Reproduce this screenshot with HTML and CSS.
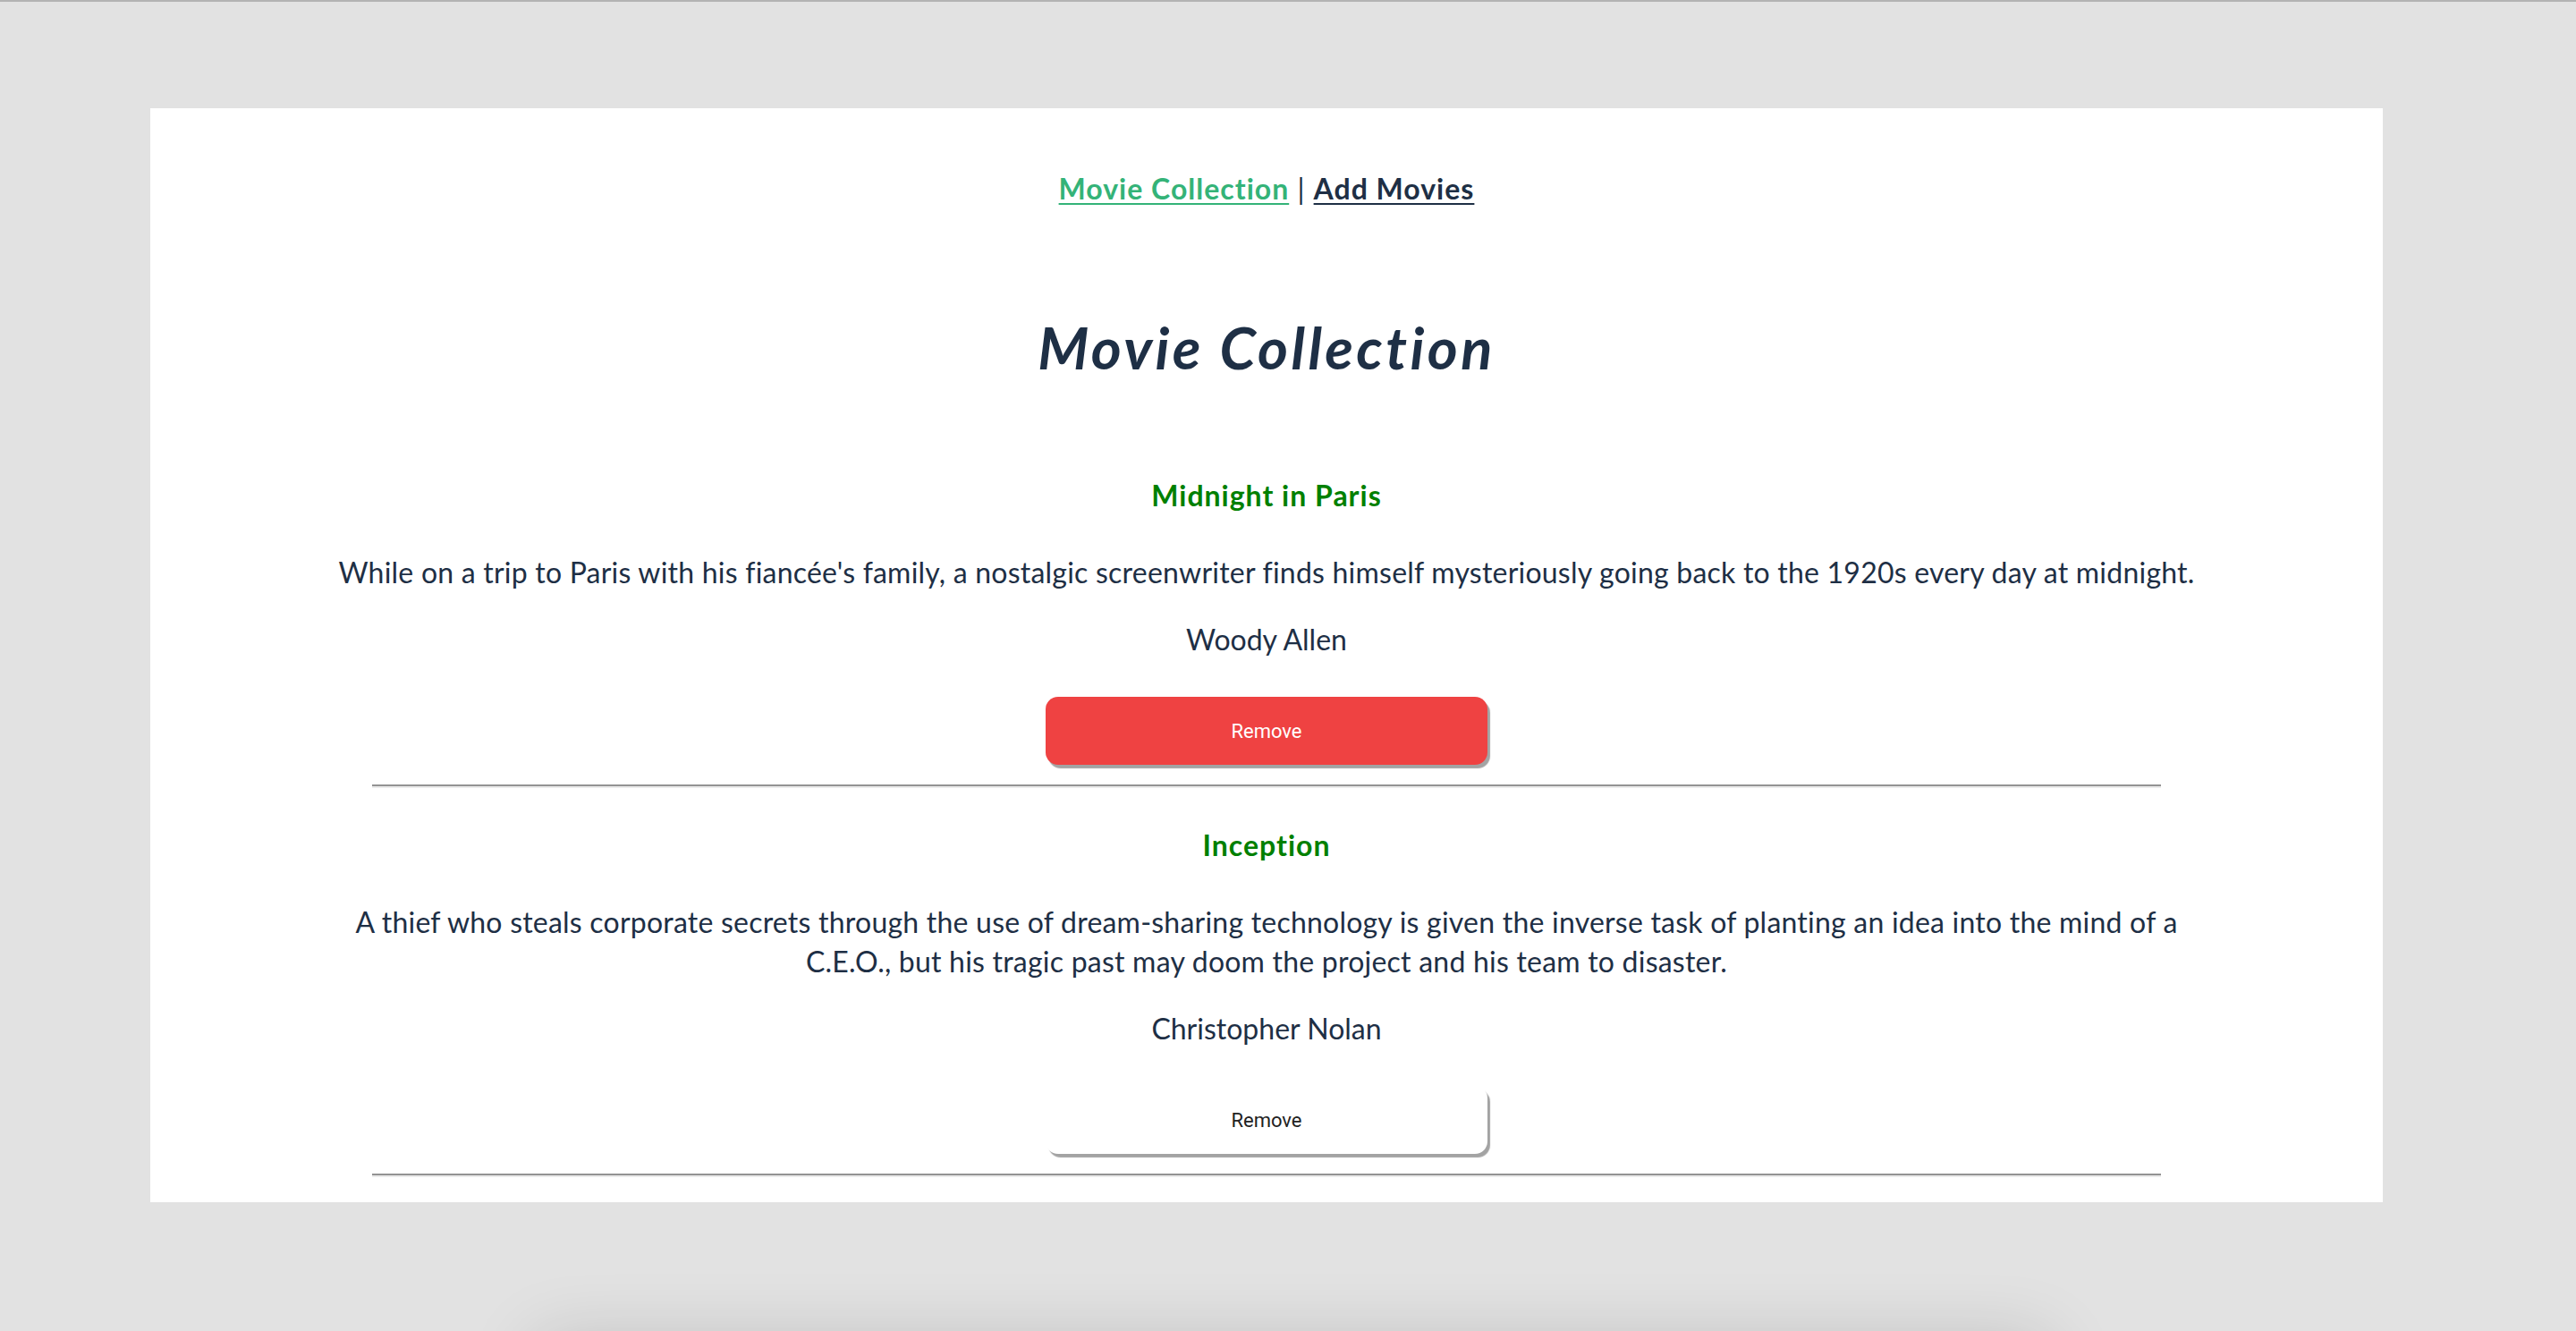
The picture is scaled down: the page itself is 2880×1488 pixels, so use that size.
FILE: index.html
```html
<!DOCTYPE html>
<html lang="en">
<head>
<meta charset="utf-8">
<title>Movie Collection</title>
<link rel="stylesheet" href="styles.css">
</head>
<body>
<div class="app">
  <nav class="nav"><a class="nav-link nav-link--active">Movie Collection</a> | <a class="nav-link">Add Movies</a></nav>
  <h1 class="page-title">Movie Collection</h1>
  <div class="movie">
    <h3 class="movie-title">Midnight in Paris</h3>
    <p class="movie-desc">While on a trip to Paris with his fiancée's family, a nostalgic screenwriter finds himself mysteriously going back to the 1920s every day at midnight.</p>
    <p class="movie-director">Woody Allen</p>
    <button class="remove remove--danger">Remove</button>
    <hr class="divider">
  </div>
  <div class="movie">
    <h3 class="movie-title">Inception</h3>
    <p class="movie-desc">A thief who steals corporate secrets through the use of dream-sharing technology is given the inverse task of planting an idea into the mind of a C.E.O., but his tragic past may doom the project and his team to disaster.</p>
    <p class="movie-director">Christopher Nolan</p>
    <button class="remove">Remove</button>
    <hr class="divider">
  </div>
</div>
<div class="below"></div>
</body>
</html>
```
FILE: styles.css
```css
html {
  overflow: hidden;
}
body {
  margin: 0;
  background: #e2e2e2;
  border-top: 2px solid #b3b3b3;
  font-family: "Lato", "Liberation Sans", sans-serif;
}
.app {
  margin: 119px 0 0 168px;
  width: 2496px;
  background: #ffffff;
  text-align: center;
  color: #1e2f45;
  padding-bottom: 28px;
}
.nav {
  padding-top: 68px;
  font-size: 32px;
  line-height: 44px;
  letter-spacing: 1px;
  font-variant-ligatures: none;
}
.nav-link {
  font-weight: 700;
  color: #1e2f45;
  text-decoration: underline;
  text-decoration-thickness: 2px;
  text-underline-offset: 4px;
}
.nav-link--active {
  color: #34b378;
}
.page-title {
  margin: 115px 0 62px;
  font-size: 65px;
  line-height: 80px;
  font-style: italic;
  font-weight: 700;
  letter-spacing: 3.4px;
  font-variant-ligatures: none;
}
.movie {
  padding-top: 42px;
}
.movie-title {
  margin: 0;
  font-size: 32px;
  line-height: 44px;
  font-weight: 700;
  letter-spacing: 1px;
  color: #008000;
}
.movie-desc {
  margin: 42px auto 0;
  width: 2090px;
  font-size: 32px;
  line-height: 44px;
  letter-spacing: 0.22px;
}
.movie-director {
  margin: 31px 0 0;
  font-size: 32px;
  line-height: 44px;
}
.remove {
  display: block;
  margin: 42px auto 0;
  width: 494px;
  height: 76px;
  border: 0;
  border-radius: 14px;
  background: #ffffff;
  color: #222222;
  font-family: "Roboto", "Liberation Sans", sans-serif;
  font-size: 22px;
  box-shadow: 3px 4px 1px #a3a3a3;
}
.remove--danger {
  background: #ef4242;
  color: #ffffff;
}
.divider {
  margin: 22px auto 0;
  width: 2000px;
  height: 0;
  border: 0;
  border-top: 2px solid #939393;
  border-bottom: 2px solid #ebebeb;
}
.below {
  margin: 155px 0 0 600px;
  width: 1690px;
  height: 200px;
  background: #e2e2e2;
  box-shadow: 0 0 80px rgba(0, 0, 0, 0.16);
}
```
